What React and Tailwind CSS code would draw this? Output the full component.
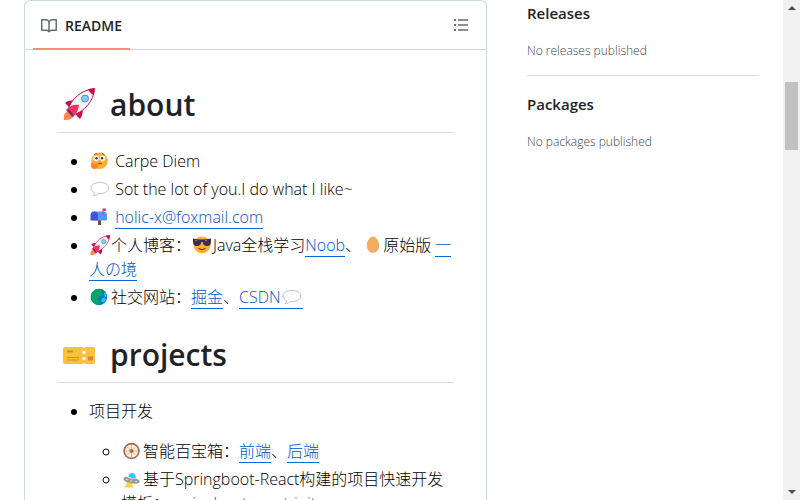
import React from "react";

function Icon({ box = "0 0 20 20", className = "h-5 w-[22px]", children }) {
  return (
    <svg viewBox={box} className={"inline-block align-[-4px] " + className} aria-hidden="true">
      {children}
    </svg>
  );
}

function Rocket({ className }) {
  return (
    <Icon box="0 0 32 32" className={className}>
      <path d="M1 32c-1-5 1-9 6-9l4 4c-1 4-5 5-10 5Z" fill="#ff8257" />
      <path d="M2 15c4-3 8-3 11-1l-5 7c-2-2-4-4-6-6ZM17 31c3-4 3-8 2-11l-7 5c1 2 3 4 5 6Z" fill="#ca0b4a" />
      <path d="M5 22c3-11 13-20 26.500-21.500C31 13 21 24 10 27Z" fill="#f4f4f4" stroke="#ca0b4a" strokeWidth="1" />
      <path d="M25 1.500c2-1 4-1 6.500-1 0 2-.2 4-1 6.500-2-1-4-3-5.500-5.500Z" fill="#ca0b4a" />
      <path d="M3 22c3-4 8-6 13-5-1 6-3 9-6 12Z" fill="#f92f60" />
      <path d="m5 22 5 6" stroke="#533566" strokeWidth="2" />
      <circle cx="22" cy="10.500" r="3.500" fill="#83cbff" stroke="#5092c8" strokeWidth="1" />
    </Icon>
  );
}

function Thinking() {
  return (
    <Icon>
      <circle cx="9.500" cy="9.800" r="8.300" fill="#ffb02e" />
      <circle cx="6" cy="7.300" r="2.800" fill="#fff" />
      <circle cx="12.500" cy="7.300" r="2.800" fill="#fff" />
      <circle cx="6.500" cy="7.200" r="1.200" fill="#402a32" />
      <circle cx="12" cy="7.200" r="1.200" fill="#402a32" />
      <path d="M4 3.700c1-1 2-1 3-1M12 2.700c1 0 2 .5 2.500 1.500M8 12.800q2-1 4 0" fill="none" stroke="#5a3430" strokeWidth=".9" />
      <path d="M1.500 11.500q1.500-1 2 1.500l5-.5c1.500.5 1 1.500-.5 1.800.5 2-1 3.700-3.500 3.700C1 18 .5 15 1.500 11.500Z" fill="#ff822d" />
    </Icon>
  );
}

function Bubble() {
  return (
    <Icon>
      <path d="M10 3.500c-5 0-9 2-9 5.500 0 2 1.500 3.700 3.500 4.700.3 1.500-.5 2.300-1.500 3 2 0 3.700-.7 4.700-2 6.500.5 11-2.200 11-5.700C18.700 5.500 15 3.500 10 3.500Z" fill="#fff" stroke="#b4acbc" strokeWidth=".8" />
    </Icon>
  );
}

function Mailbox() {
  return (
    <Icon>
      <path d="M8 12h3v6H8z" fill="#7d4533" />
      <path d="M4 4.500h9.500c2 0 3.500 1.500 3.500 4v5H4Z" fill="#4e9bf5" />
      <path d="M.5 8.500c0-2.500 1.300-4 3.700-4S8 6 8 8.500v5H.5Z" fill="#4352df" />
      <path d="M12.500 8.500V1.500H16v2.500h-2.500v4.500Z" fill="#f8315f" />
    </Icon>
  );
}

function Sunglasses() {
  return (
    <Icon>
      <circle cx="10" cy="10" r="8.500" fill="#ffb02e" />
      <path d="M1 3.500q9 2 18 0v3c0 3-1.300 4.500-4 4.500-2.800 0-4-1.500-4.300-4h-1.400C9 9.500 7.800 11 5 11c-2.700 0-4-1.500-4-4.500Z" fill="#402a52" />
      <path d="m3 6 2-1M13 6l2-1" stroke="#9b83aa" />
      <path d="M6.500 13.500q3.500 2.500 7 0" fill="none" stroke="#402a32" />
    </Icon>
  );
}

function Egg() {
  return (
    <Icon>
      <path d="M11 1.500c3.200 0 6.200 4.700 6.200 9 0 4.200-2.700 7.300-6.200 7.300s-6.200-3.100-6.200-7.300c0-4.300 3-9 6.200-9Z" fill="#f3ad61" />
    </Icon>
  );
}

function Globe() {
  return (
    <Icon>
      <circle cx="9" cy="10" r="8.200" fill="#0074ba" />
      <path d="M3.500 4C6.500 1.500 10.500 1.500 12.500 3l-1 2 2 2-1.500 2-3 .5-1 3 2 1.500-1 4C4 18 .5 14 .8 9.500 1 7 2 5 3.500 4Z" fill="#00a56a" />
      <path d="m11.500 12 3-1.500 1.500 2-2 3-2.500-1ZM14 5.500l2 1 1 3-2.500.5Z" fill="#26c9fc" />
    </Icon>
  );
}

function Ticket() {
  return (
    <Icon box="0 -2 32 32" className="mt-1.5 h-8 w-9">
      <path d="M2 7h17.500l1.500 1 1.500-1H30q2 0 2 2v13q0 2-2 2h-7.500L21 23l-1.500 1H2q-2 0-2-2V9q0-2 2-2Z" fill="#f9c23c" />
      <path d="M4 10.500h6v2H4ZM4 17h12v1H4ZM4 19.500h12v1H4ZM25 16.500h5v4h-5Z" fill="#d3883e" />
      <circle cx="21" cy="12.500" r="1.700" fill="#fff" />
      <circle cx="21" cy="18.500" r="1.700" fill="#fff" />
    </Icon>
  );
}

function Wheel() {
  return (
    <Icon>
      <circle cx="9.500" cy="10" r="7.400" fill="#f8ecdf" stroke="#a56953" strokeWidth="1.700" />
      <path d="M9.500 4v12M3.500 10h12M5.300 5.800l8.400 8.400M13.700 5.800l-8.400 8.400" stroke="#e0a56c" strokeWidth=".8" />
      <circle cx="9.500" cy="10" r="1.900" fill="#a56953" />
    </Icon>
  );
}

function Saucer() {
  return (
    <Icon>
      <path d="m5 13-2.500 5.500H11L10 13Z" fill="#fcd53f" />
      <path d="M1.500 9.500C2 7.500 4 7.500 5.500 8c2 1.500 5 2 8 1.300 2.500.7 4.500 2.200 4.200 3.700-.7 2.200-5.500 2-9.700 1-4-1-7-2.500-6.500-4.500Z" fill="#9b9b9b" />
      <path d="M6.500 7.500c.3-2.500 2-4 4.200-3.500 2.300.5 3.500 2.500 3 4.800-2.500.6-5.200.2-7.200-1.300Z" fill="#26c9fc" />
      <circle cx="5" cy="10.500" r=".8" fill="#e6e6e6" />
      <circle cx="9" cy="12" r=".8" fill="#e6e6e6" />
      <circle cx="14" cy="12.500" r=".8" fill="#e6e6e6" />
    </Icon>
  );
}

function A({ children }) {
  return (
    <a href="#" className="border-b border-[#0969da] text-[#0056c7]">
      {children}
    </a>
  );
}

function Heading({ icon, className = "", children }) {
  return (
    <h1 className={"flex h-[51px] items-start gap-[13px] border-b border-[#d8dee4] pl-1 text-[30px] leading-[45px] font-semibold " + className}>
      {icon}
      <span>{children}</span>
    </h1>
  );
}

function SideSection({ title, text, className }) {
  return (
    <section className={className}>
      <h2 className="mb-[17px] text-[15px] leading-6 font-semibold">{title}</h2>
      <p className="text-xs leading-[18px] font-light text-[#3d4650]">{text}</p>
    </section>
  );
}

export default function App() {
  return (
    <div className="flex h-screen overflow-hidden bg-white font-['Open_Sans','Noto_Sans_CJK_SC',sans-serif] text-[#1f2328]">
      <div className="grid min-w-0 flex-1 grid-cols-[minmax(0,1fr)_232px] gap-10 px-6">
        <main className="min-w-0 self-start rounded-t-md border border-b-0 border-[#d0d7de]">
          <header className="flex h-[49px] items-center justify-between border-b border-[#d0d7de] px-2">
            <a href="#" className="flex h-[49px] items-center gap-2 border-b-2 border-[#fd8c73] px-2 pt-1 text-sm font-semibold">
              <svg viewBox="0 0 16 16" className="h-4 w-4 fill-[#656d76]" aria-hidden="true">
                <path d="M0 1.750A.75.75 0 0 1 .75 1h4.253c1.227 0 2.317.59 3 1.501A3.743 3.743 0 0 1 11.006 1h4.245a.75.75 0 0 1 .75.75v10.500a.75.75 0 0 1-.75.75h-4.507a2.250 2.250 0 0 0-1.591.659l-.622.621a.75.75 0 0 1-1.060 0l-.622-.621A2.250 2.250 0 0 0 5.258 13H.75a.75.75 0 0 1-.75-.75Zm7.251 10.324.004-5.073-.002-2.253A2.250 2.250 0 0 0 5.003 2.500H1.500v9h3.757a3.750 3.750 0 0 1 1.994.574ZM8.755 4.750l-.004 7.322a3.752 3.752 0 0 1 1.992-.572H14.500v-9h-3.495a2.250 2.250 0 0 0-2.250 2.250Z" />
              </svg>
              README
            </a>
            <button type="button" aria-label="Outline" className="p-[9px]">
              <svg viewBox="0 0 16 16" className="h-4 w-4 fill-[#656d76]" aria-hidden="true">
                <path d="M1 2h2v2H1ZM5 2.250h10v1.500H5ZM1 7h2v2H1ZM5 7.250h10v1.500H5ZM1 12h2v2H1ZM5 12.250h10v1.500H5Z" />
              </svg>
            </button>
          </header>
          <article className="p-8 text-base leading-6">
            <Heading icon={<Rocket className="mt-1.5 h-8 w-9" />}>about</Heading>
            <ul className="mt-4 list-disc space-y-1 pl-8 font-light text-black">
              <li><Thinking /> Carpe Diem</li>
              <li><Bubble /> Sot the lot of you.I do what I like~</li>
              <li><Mailbox /> <A>holic-x@foxmail.com</A></li>
              <li>
                <Rocket className="h-5 w-[22px]" />个人博客：<Sunglasses />Java全栈学习<A>Noob</A>、<Egg />原始版 <A>一人の境</A>
              </li>
              <li><Globe />社交网站：<A>掘金</A>、<A>CSDN<Bubble /></A></li>
            </ul>
            <Heading className="mt-[23px]" icon={<Ticket />}>projects</Heading>
            <ul className="mt-4 list-disc pl-8 font-light text-black">
              <li>
                <p className="mb-4">项目开发</p>
                <ul className="list-[circle] space-y-1 pl-8">
                  <li><Wheel />智能百宝箱：<A>前端</A>、<A>后端</A></li>
                  <li>
                    <Saucer />基于Springboot-React构建的项目快速开发模板：<A>springboot-react-init</A>
                  </li>
                </ul>
              </li>
            </ul>
          </article>
        </main>
        <aside>
          <SideSection title="Releases" text="No releases published" className="border-b border-[#d8dee4] pt-px pb-[15px]" />
          <SideSection title="Packages" text="No packages published" className="pt-4" />
        </aside>
      </div>
      <div className="flex w-[17px] shrink-0 flex-col items-center justify-between bg-[#f1f1f1] py-1.5" aria-hidden="true">
        <svg viewBox="0 0 8 4" className="h-1 w-2 fill-[#505050]"><path d="m0 4 4-4 4 4Z" /></svg>
        <span className="mb-auto mt-[72px] h-[68px] w-[13px] bg-[#c1c1c1]" />
        <svg viewBox="0 0 8 4" className="h-1 w-2 fill-[#505050]"><path d="m0 0 4 4 4-4Z" /></svg>
      </div>
    </div>
  );
}
